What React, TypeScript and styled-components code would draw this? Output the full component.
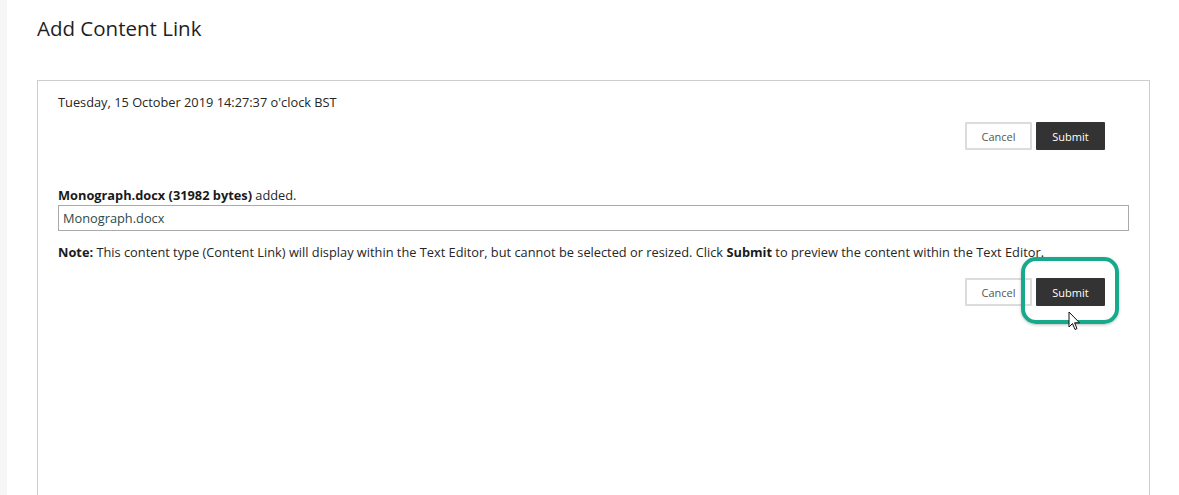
import React from "react";
import styled, { createGlobalStyle } from "styled-components";

const Global = createGlobalStyle`
  html, body { margin: 0; padding: 0; background: #fff; }
  body { font-family: "Open Sans", "Liberation Sans", sans-serif; color: #262626; }
`;

const Page = styled.div`
  display: flex;
  height: 495px;
  overflow: hidden;
`;

const SideStrip = styled.div`
  width: 7px;
  flex: none;
  background: #f6f6f6;
`;

const Main = styled.div`
  flex: 1;
  padding: 0 29px 0 30px;
`;

const Title = styled.h1`
  margin: 0;
  padding-top: 15px;
  height: 80px;
  box-sizing: border-box;
  font-size: 20.5px;
  font-weight: 400;
  line-height: 27px;
  color: #1f1f1f;
`;

const Panel = styled.div`
  border: 1px solid #cdcdcd;
  border-bottom: none;
  height: 500px;
  padding: 12px 20px 0 20px;
  box-sizing: border-box;
`;

const DateLine = styled.div`
  font-size: 12.8px;
  line-height: 18px;
`;

const ButtonRow = styled.div<{ $top: number }>`
  display: flex;
  justify-content: flex-end;
  gap: 4px;
  margin-top: ${(p) => p.$top}px;
  padding-right: 24px;
`;

const ButtonWrap = styled.div`
  position: relative;
`;

const Btn = styled.button<{ $primary?: boolean }>`
  height: 28px;
  box-sizing: border-box;
  font-family: "Open Sans", "Liberation Sans", sans-serif;
  font-size: 11px;
  padding: 0;
  width: ${(p) => (p.$primary ? 69 : 67)}px;
  border-radius: 1px;
  cursor: pointer;
  background: ${(p) => (p.$primary ? "#333333" : "#ffffff")};
  color: ${(p) => (p.$primary ? "#ffffff" : "#555555")};
  border: ${(p) => (p.$primary ? "none" : "2px solid #dcdcdc")};
`;

const FileLabel = styled.div`
  margin-top: 36px;
  font-size: 12.8px;
  line-height: 18px;
  strong { font-weight: 700; color: #1a1a1a; }
`;

const FileInput = styled.input`
  display: block;
  width: 100%;
  box-sizing: border-box;
  height: 26px;
  margin-top: 1px;
  border: 1px solid #aaaaaa;
  padding: 0 4px;
  font-family: "Open Sans", "Liberation Sans", sans-serif;
  font-size: 12.8px;
  color: #2d4a4a;
  outline: none;
`;

const Note = styled.p`
  margin: 12px 0 0 0;
  font-size: 12.8px;
  line-height: 18px;
  strong { font-weight: 700; color: #1a1a1a; }
`;

const Highlight = styled.div`
  position: absolute;
  left: -15px;
  top: -21px;
  width: 98px;
  height: 67px;
  box-sizing: border-box;
  border: 4px solid #17a98b;
  border-radius: 15px;
  box-shadow: 0 1px 3px rgba(0, 0, 0, 0.25);
  pointer-events: none;
`;

const Cursor = styled.svg`
  position: absolute;
  left: 32px;
  top: 33px;
  pointer-events: none;
`;

export default function App() {
  return (
    <>
      <Global />
      <Page>
        <SideStrip />
        <Main>
          <Title>Add Content Link</Title>
          <Panel>
            <DateLine>Tuesday, 15 October 2019 14:27:37 o'clock BST</DateLine>
            <ButtonRow $top={11}>
              <Btn>Cancel</Btn>
              <Btn $primary>Submit</Btn>
            </ButtonRow>
            <FileLabel>
              <strong>Monograph.docx (31982 bytes)</strong> added.
            </FileLabel>
            <FileInput defaultValue="Monograph.docx" />
            <Note>
              <strong>Note:</strong> This content type (Content Link) will display within the Text Editor, but cannot be selected or resized. Click <strong>Submit</strong> to preview the content within the Text Editor.
            </Note>
            <ButtonRow $top={17}>
              <Btn>Cancel</Btn>
              <ButtonWrap>
                <Btn $primary>Submit</Btn>
                <Highlight />
                <Cursor width="14" height="22" viewBox="0 0 14 22">
                  <path d="M1 1 L1 16 L4.5 12.5 L7 18.5 L9 17.6 L6.6 11.8 L11.5 11.8 Z" fill="#ffffff" stroke="#111" strokeWidth="1" strokeLinejoin="round" />
                </Cursor>
              </ButtonWrap>
            </ButtonRow>
          </Panel>
        </Main>
      </Page>
    </>
  );
}
